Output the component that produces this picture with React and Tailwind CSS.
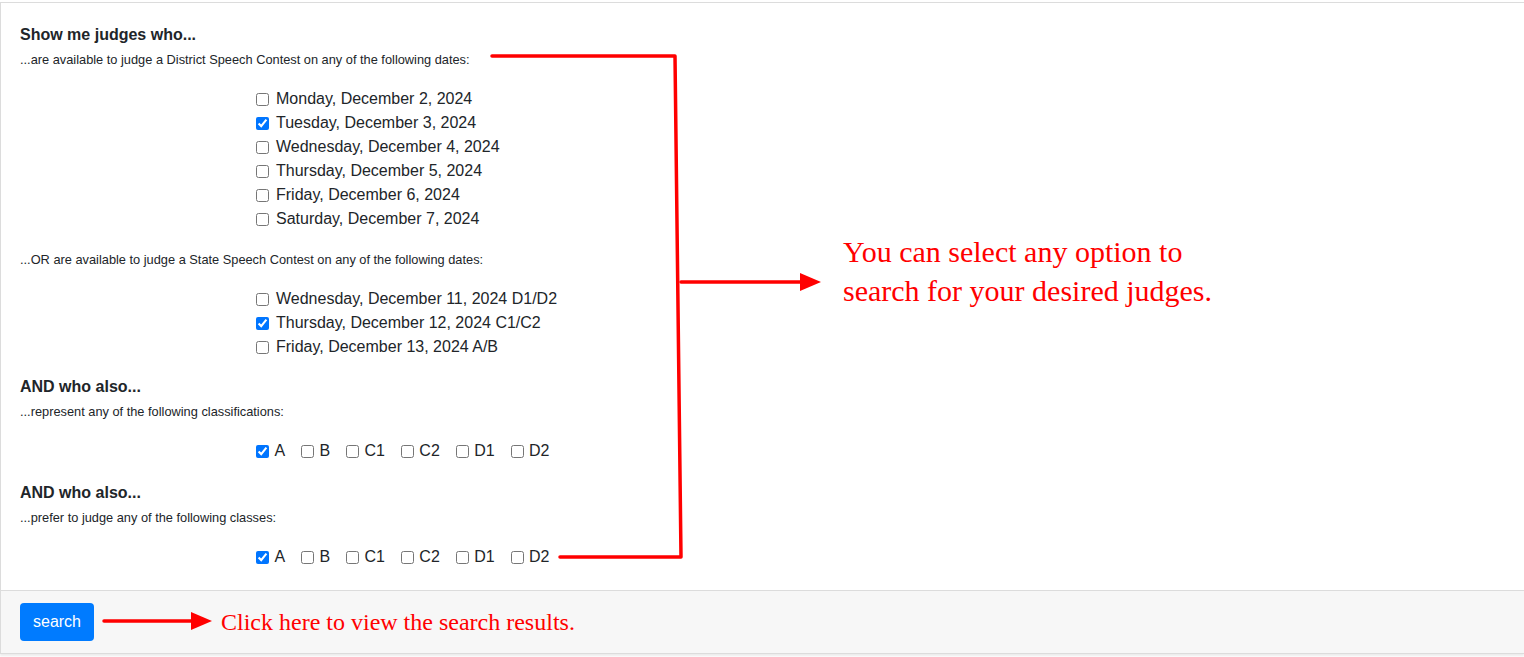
import React from 'react';

const districtDates = [
  { label: 'Monday, December 2, 2024', checked: false },
  { label: 'Tuesday, December 3, 2024', checked: true },
  { label: 'Wednesday, December 4, 2024', checked: false },
  { label: 'Thursday, December 5, 2024', checked: false },
  { label: 'Friday, December 6, 2024', checked: false },
  { label: 'Saturday, December 7, 2024', checked: false },
];

const stateDates = [
  { label: 'Wednesday, December 11, 2024 D1/D2', checked: false },
  { label: 'Thursday, December 12, 2024 C1/C2', checked: true },
  { label: 'Friday, December 13, 2024 A/B', checked: false },
];

const classes = ['A', 'B', 'C1', 'C2', 'D1', 'D2'];

function DateList({ items }) {
  return (
    <div className="pl-[236px] flex flex-col">
      {items.map((d) => (
        <label key={d.label} className="flex items-center h-6 text-base">
          <input type="checkbox" defaultChecked={d.checked} className="w-[13px] h-[13px] m-0 mr-[7px]" />
          <span>{d.label}</span>
        </label>
      ))}
    </div>
  );
}

function ClassRow() {
  return (
    <div className="pl-[236px] flex items-center h-6">
      {classes.map((c, i) => (
        <label key={c} className="flex items-center mr-4 text-base">
          <input type="checkbox" defaultChecked={i === 0} className="w-[13px] h-[13px] m-0 mr-[5.4px]" />
          <span>{c}</span>
        </label>
      ))}
    </div>
  );
}

function Annotations() {
  return (
    <>
      <svg className="absolute inset-0 pointer-events-none" width="1524" height="657">
        <g stroke="#ff0000" strokeWidth="3.5" fill="none" strokeLinecap="round" strokeLinejoin="round">
          <path d="M492 56 L675 56 L681 557 L560 557" />
          <path d="M681 282 L802 282" />
          <path d="M104 621 L194 621" />
        </g>
        <polygon points="800,273 821,282 800,291" fill="#ff0000" />
        <polygon points="191,612 212,621 191,630" fill="#ff0000" />
      </svg>
      <div className="absolute left-[843px] top-[232px] text-[#ff0000] text-[30px] leading-[39px] font-['Liberation_Serif',serif]">
        You can select any option to<br />search for your desired judges.
      </div>
    </>
  );
}

export default function App() {
  return (
    <div className="relative w-[1524px] h-[657px] bg-white font-['Liberation_Sans',Arial,sans-serif] text-[#212529]">
      <div className="pt-[2px]">
        <div className="border border-[#dcdcdc] border-r-0 shadow-[0_2px_2px_rgba(0,0,0,0.08)]">
          <div className="pl-[19px] pr-5 pt-5 pb-[21px]">
            <h5 className="text-base font-bold leading-6">Show me judges who...</h5>
            <p className="text-[12.8px] leading-5 mt-[3px] mb-[17px]">...are available to judge a District Speech Contest on any of the following dates:</p>
            <DateList items={districtDates} />

            <p className="text-[12.8px] leading-5 mt-[19px] mb-[17px]">...OR are available to judge a State Speech Contest on any of the following dates:</p>
            <DateList items={stateDates} />

            <h5 className="text-base font-bold leading-6 mt-4">AND who also...</h5>
            <p className="text-[12.8px] leading-5 mt-[3px] mb-[17px]">...represent any of the following classifications:</p>
            <ClassRow />

            <h5 className="text-base font-bold leading-6 mt-[18px]">AND who also...</h5>
            <p className="text-[12.8px] leading-5 mt-[3px] mb-[17px]">...prefer to judge any of the following classes:</p>
            <ClassRow />
          </div>

          <div className="bg-[#f7f7f7] border-t border-[#dcdcdc] pl-[19px] pr-5 py-3 flex items-center">
            <button className="bg-[#007bff] text-white text-base rounded h-[38px] w-[74px]">search</button>
            <span className="ml-[127px] -mt-px text-[#ff0000] text-[24px] font-['Liberation_Serif',serif]">Click here to view the search results.</span>
          </div>
        </div>
      </div>
      <Annotations />
    </div>
  );
}
